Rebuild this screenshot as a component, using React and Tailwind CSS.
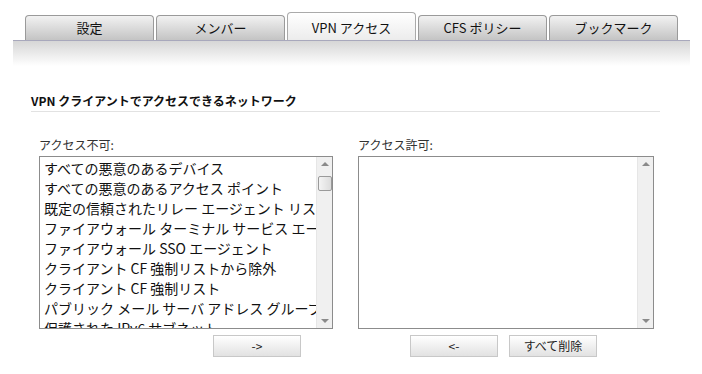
import React from "react";

const font = { fontFamily: '"Noto Sans CJK JP", "Liberation Sans", sans-serif' };

const tabs = ["設定", "メンバー", "VPN アクセス", "CFS ポリシー", "ブックマーク"];

const denied = [
  "すべての悪意のあるデバイス",
  "すべての悪意のあるアクセス ポイント",
  "既定の信頼されたリレー エージェント リスト",
  "ファイアウォール ターミナル サービス エージェント",
  "ファイアウォール SSO エージェント",
  "クライアント CF 強制リストから除外",
  "クライアント CF 強制リスト",
  "パブリック メール サーバ アドレス グループ",
  "保護された IPv6 サブネット",
];

const Scrollbar = ({ thumb }) => (
  <div className="w-[16px] h-full bg-[#f0f0f0] border-l border-[#e6e6e6] flex flex-col items-center justify-between py-[5px] shrink-0">
    <div className="flex flex-col items-center w-full">
      <div className="w-0 h-0 border-x-[4px] border-x-transparent border-b-[4px] border-b-[#8a8a8a]" />
      {thumb && (
        <div className="mt-[10px] w-[14px] h-[15px] rounded-[2px] border border-[#9a9a9a] bg-gradient-to-r from-[#f4f4f4] to-[#dcdcdc]" />
      )}
    </div>
    <div className="w-0 h-0 border-x-[4px] border-x-transparent border-t-[4px] border-t-[#8a8a8a]" />
  </div>
);

const Btn = ({ children, className = "" }) => (
  <button
    className={`h-[22px] w-[88px] border border-[#c8c8c8] bg-gradient-to-b from-[#ffffff] to-[#e2e2e2] text-[12px] text-[#222] leading-none ${className}`}
  >
    {children}
  </button>
);

export default function App() {
  return (
    <div className="w-[702px] h-[374px] bg-white overflow-hidden" style={font}>
      {/* Tabs */}
      <div className="flex items-end gap-[2px] pl-[25px] pt-[12px]">
        {tabs.map((t, i) =>
          i === 2 ? (
            <div
              key={t}
              className="w-[129px] h-[28px] rounded-t-[4px] border border-b-0 border-[#aaa] bg-gradient-to-b from-[#ffffff] to-[#ececec] flex items-center justify-center text-[13px] text-[#111] pt-[2px]"
            >
              {t}
            </div>
          ) : (
            <div
              key={t}
              className="w-[129px] h-[25px] rounded-t-[4px] border border-b-0 border-[#9a9a9a] bg-gradient-to-b from-[#f2f2f2] to-[#c4c4c4] flex items-center justify-center text-[13px] text-[#111]"
            >
              {t}
            </div>
          )
        )}
      </div>
      <div className="ml-[13px] w-[677px] h-[26px] border-t border-[#a8a8bc] bg-gradient-to-b from-[#d6d6d6] to-[#ffffff]" />

      {/* Heading */}
      <div className="ml-[31px] w-[629px] mt-[27px] border-b border-[#e2e2e2] pb-[2px]">
        <h2 className="text-[12px] font-bold text-[#111] leading-[16px]">
          VPN クライアントでアクセスできるネットワーク
        </h2>
      </div>

      {/* Lists */}
      <div className="flex gap-[25px] ml-[39px] mt-[25px]">
        <div className="w-[294px]">
          <div className="text-[12px] text-[#333] leading-[16px] mb-[3px]">アクセス不可:</div>
          <div className="h-[173px] border border-[#8c8c8c] flex">
            <div className="flex-1 overflow-hidden pl-[4px] pt-[1px]">
              {denied.map((d) => (
                <div key={d} className="text-[14px] leading-[20px] text-[#111] whitespace-nowrap">
                  {d}
                </div>
              ))}
            </div>
            <Scrollbar thumb />
          </div>
          <Btn className="mt-[6px] ml-[174px]">-&gt;</Btn>
        </div>
        <div className="w-[296px]">
          <div className="text-[12px] text-[#333] leading-[16px] mb-[3px]">アクセス許可:</div>
          <div className="h-[173px] border border-[#8c8c8c] flex">
            <div className="flex-1" />
            <Scrollbar />
          </div>
          <div className="flex gap-[11px] mt-[6px] ml-[52px]">
            <Btn>&lt;-</Btn>
            <Btn>すべて削除</Btn>
          </div>
        </div>
      </div>
    </div>
  );
}
